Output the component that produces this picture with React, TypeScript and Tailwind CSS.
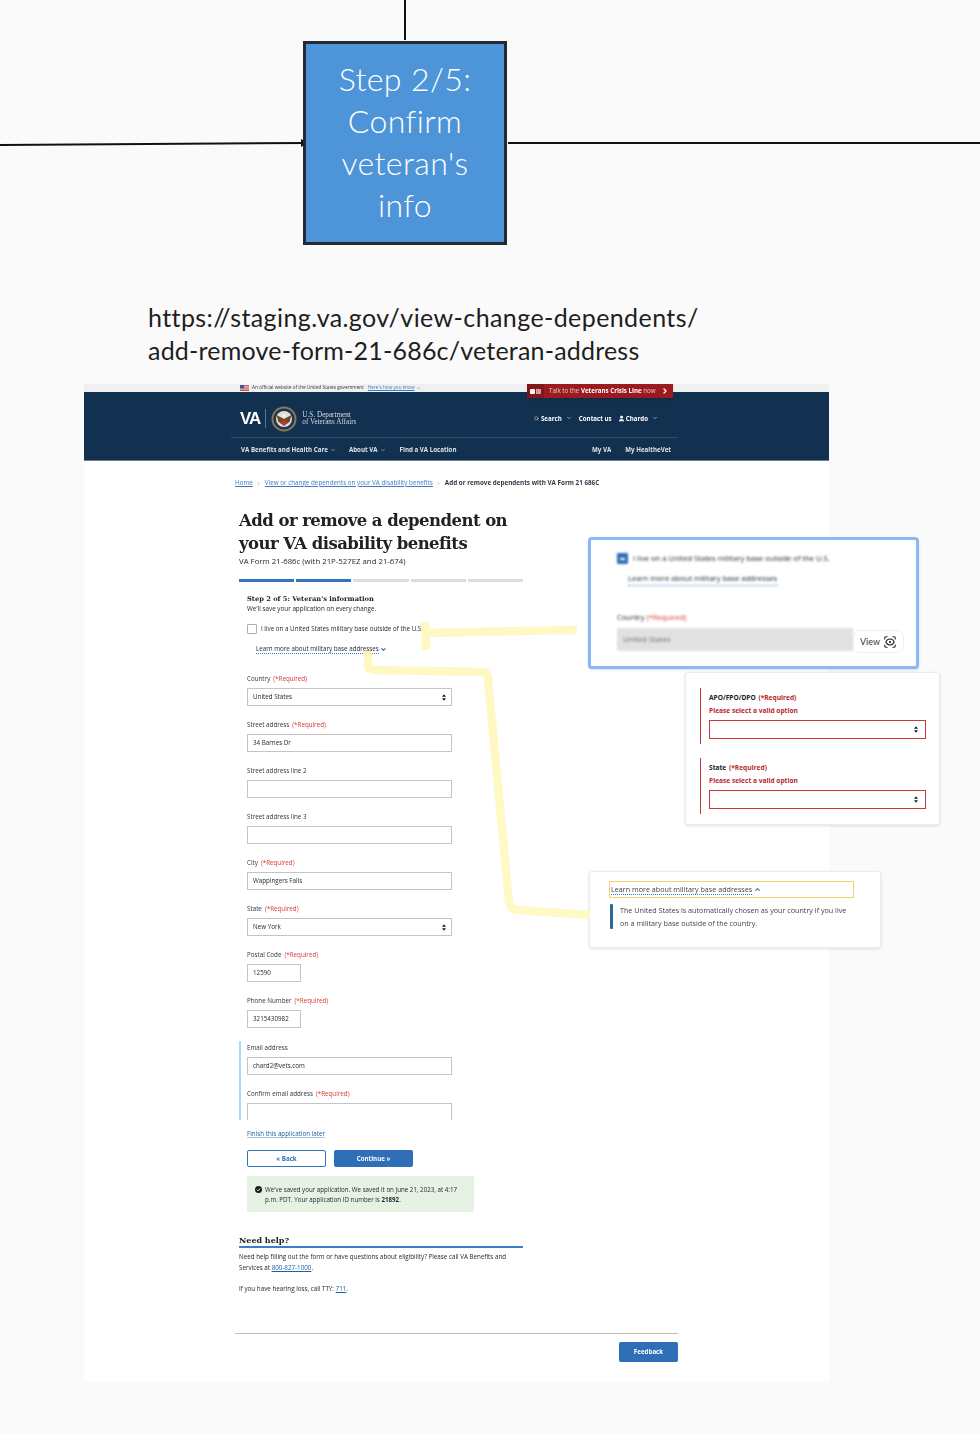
import { ChevronDown, ChevronRight, ChevronUp, ScanEye, Search, User } from "lucide-react";

const sans = "font-['Open_Sans','Noto_Sans',sans-serif]";
const slab = "font-['DejaVu_Serif',serif]";

function SelectArrows({ className = "" }: { className?: string }) {
  return (
    <svg viewBox="0 0 6 10" className={`w-[4px] h-[7px] ${className}`}>
      <path d="M3 0 6 4H0zM3 10 0 6h6z" fill="#1b1b1b" />
    </svg>
  );
}

function Required() {
  return <span className="text-[#d83933] ml-[3px]">(*Required)</span>;
}

function Field({
  label,
  required,
  value,
  select,
  short,
}: {
  label: string;
  required?: boolean;
  value?: string;
  select?: boolean;
  short?: boolean;
}) {
  return (
    <div className="mb-[14px]">
      <div className="text-[6.25px] leading-[10px] mb-[4px] text-[#2f3640]">
        {label}
        {required && <Required />}
      </div>
      <div
        className={`h-[18px] border border-[#c4c4c4] bg-white flex items-center justify-between px-[5px] text-[6.25px] text-[#232830] ${
          short ? "w-[54px]" : "w-[205px]"
        }`}
      >
        <span>{value}</span>
        {select && <SelectArrows />}
      </div>
    </div>
  );
}

function VaSeal() {
  return (
    <svg viewBox="0 0 26 26" className="w-[26px] h-[26px]">
      <circle cx="13" cy="13" r="12.5" fill="#8a7a4e" />
      <circle cx="13" cy="13" r="10.6" fill="#1c3560" />
      <circle cx="13" cy="13" r="8" fill="#e4e0d2" />
      <path d="M5.5 9 13 13l7.5-4-2 7-5.5 3-5.5-3z" fill="#6b4a25" />
      <path d="M9 17l4-3 4 3-4 3z" fill="#b23a3a" />
      <circle cx="13" cy="9.5" r="1.5" fill="#f4f1e5" />
    </svg>
  );
}

function Flag() {
  return (
    <svg viewBox="0 0 18 12" className="w-[9px] h-[6px]">
      <rect width="18" height="12" fill="#c8525c" />
      <path d="M0 2.5h18M0 5.5h18M0 8.5h18" stroke="#f3e9ea" strokeWidth="1.3" />
      <rect width="8" height="6.5" fill="#3d5a98" />
    </svg>
  );
}

function Header() {
  return (
    <div className="relative">
      <div className="h-[8px] bg-[#f0f0f0] pl-[156px] flex items-center gap-[3px] text-[4.7px] text-[#323a45]">
        <Flag />
        <span>An official website of the United States government</span>
        <span className="text-[#3d7cc4] underline ml-[1px]">Here's how you know</span>
        <ChevronDown size={5} className="-ml-[2px] text-[#3d7cc4]" />
      </div>
      <div className="h-[69px] bg-[#12304f] pl-[147px] border-b border-[#6b8098]">
        <div className="w-[447px] h-[46px] border-b border-[#2f4e6e] flex items-center pl-[9px] pt-[8px] text-white">
          <span className="text-[17px] font-bold font-['Liberation_Sans',sans-serif] tracking-[-1px]">VA</span>
          <span className="w-px h-[19px] bg-[#5d7690] ml-[5px] mr-[5px]" />
          <VaSeal />
          <div className="ml-[5px] text-[7.2px] leading-[7px] font-['Liberation_Serif',serif] text-[#d5dbe2]">
            <div>U.S. Department</div>
            <div>of Veterans Affairs</div>
          </div>
          <div className={`ml-auto flex items-center text-[6.2px] font-bold pr-[20px] ${sans}`}>
            <Search size={5} className="mr-[2px]" />
            <span>Search</span>
            <ChevronDown size={6} className="ml-[4px] mr-[7px]" />
            <span>Contact us</span>
            <User size={7} fill="white" className="ml-[6px] mr-[1px]" />
            <span>Chardo</span>
            <ChevronDown size={6} className="ml-[4px]" />
          </div>
        </div>
        <div className={`w-[447px] h-[23px] flex items-center pl-[10px] pr-[7px] text-[6.2px] font-bold text-[#dfe4ea] ${sans}`}>
          <span>VA Benefits and Health Care</span>
          <ChevronDown size={6} className="ml-[2px] mr-[13px]" />
          <span>About VA</span>
          <ChevronDown size={6} className="ml-[2px] mr-[14px]" />
          <span>Find a VA Location</span>
          <span className="ml-auto">My VA</span>
          <span className="ml-[14px]">My HealtheVet</span>
        </div>
      </div>
      <div className={`absolute left-[443px] top-0 w-[146px] h-[14px] bg-[#9b1a20] shadow-sm flex items-center text-[6.2px] text-[#e7c4c5] ${sans}`}>
        <span className="w-[17px] h-full bg-[#84151a] flex items-center justify-center">
          <span className="w-[5px] h-[5px] bg-white rounded-[1px] mr-[1px]" />
          <span className="w-[5px] h-[5px] bg-[#d89a9c]" />
        </span>
        <span className="ml-[5px]">
          Talk to the <b className="text-white">Veterans Crisis Line</b> now
        </span>
        <ChevronRight size={8} strokeWidth={4} className="ml-auto mr-[4px] text-white" />
      </div>
    </div>
  );
}

function Form() {
  return (
    <div className="pl-[4px] text-[#232830]">
      <div className={`${slab} font-bold text-[16.5px] leading-[23px] text-[#212121] mt-[22px] tracking-[-0.55px]`}>
        Add or remove a dependent on
        <br />
        your VA disability benefits
      </div>
      <div className="text-[7.8px] leading-[8px] mt-[2px]">VA Form 21-686c (with 21P-527EZ and 21-674)</div>
      <div className="flex gap-[2px] mt-[14px] w-[284px]">
        <div className="h-[3px] flex-1 bg-[#2e76be]" />
        <div className="h-[3px] flex-1 bg-[#2e76be]" />
        <div className="h-[3px] flex-1 bg-[#dcdcdc]" />
        <div className="h-[3px] flex-1 bg-[#dcdcdc]" />
        <div className="h-[3px] flex-1 bg-[#dcdcdc]" />
      </div>
      <div className="pl-[8px]">
        <div className={`${slab} font-bold text-[6.7px] leading-[10px] mt-[12px] text-[#212121]`}>
          Step 2 of 5: Veteran's information
        </div>
        <div className="text-[6.3px] leading-[10px]">We'll save your application on every change.</div>
        <div className="flex items-center mt-[10px] text-[6.25px]">
          <span className="w-[10px] h-[10px] border border-[#a9aeb1] rounded-[1px] bg-white mr-[4px]" />
          <span>I live on a United States military base outside of the U.S.</span>
        </div>
        <div className="flex items-center mt-[10px] ml-[9px] text-[6.25px] leading-[9px]">
          <span className="border-b border-dotted border-[#3d7cc4]">Learn more about military base addresses</span>
          <ChevronDown size={7} strokeWidth={4} className="ml-[1px] text-[#2e76be]" />
        </div>
        <div className="mt-[20px]">
          <Field label="Country" required value="United States" select />
          <Field label="Street address" required value="34 Barnes Dr" />
          <Field label="Street address line 2" />
          <Field label="Street address line 3" />
          <Field label="City" required value="Wappingers Falls" />
          <Field label="State" required value="New York" select />
          <Field label="Postal Code" required value="12590" short />
          <Field label="Phone Number" required value="3215430982" short />
        </div>
        <div className="-ml-[8px] pl-[6px] -mt-[1px] h-[79px] overflow-hidden border-l-2 border-[#a8dcf5]">
          <div className="pt-[2px]">
            <Field label="Email address" value="chard2@vets.com" />
            <Field label="Confirm email address" required />
          </div>
        </div>
        <div className="text-[6.25px] leading-[8px] text-[#1c5a9a] mt-[10px] underline decoration-[#a9c5e3]">
          Finish this application later
        </div>
        <div className={`flex gap-[8px] mt-[12px] text-[6.2px] font-bold ${sans}`}>
          <div className="w-[79px] h-[17px] rounded-[2px] border border-[#2e76be] bg-white flex items-center justify-center text-[#2e76be]">
            « Back
          </div>
          <div className="w-[79px] h-[17px] rounded-[2px] bg-[#2e6fb8] flex items-center justify-center text-white">
            Continue »
          </div>
        </div>
        <div className="w-[227px] h-[36px] bg-[#e6f2e3] mt-[9px] flex pl-[8px] pt-[9px] text-[6.2px] leading-[10px]">
          <svg viewBox="0 0 12 12" className="w-[7px] h-[7px] mr-[3px] mt-[1px] shrink-0">
            <circle cx="6" cy="6" r="6" fill="#1b1b1b" />
            <path d="M3 6.2 5.2 8.4 9 4" stroke="white" strokeWidth="1.6" fill="none" />
          </svg>
          <div className="w-[200px]">
            We've saved your application. We saved it on June 21, 2023, at 4:17 p.m. PDT. Your application ID number is{" "}
            <b>21892</b>.
          </div>
        </div>
      </div>
      <div className={`${slab} font-bold text-[8px] leading-[12px] mt-[22px] text-[#212121]`}>Need help?</div>
      <div className="w-[284px] h-[2px] bg-[#3a80c9]" />
      <div className="w-[284px] text-[6.25px] leading-[11px] mt-[3px]">
        Need help filling out the form or have questions about eligibility? Please call VA Benefits and Services at{" "}
        <span className="text-[#1c5fa8] underline">800-827-1000</span>.
      </div>
      <div className="text-[6.25px] leading-[11px] mt-[10px]">
        If you have hearing loss, call TTY: <span className="text-[#1c5fa8] underline">711</span>.
      </div>
    </div>
  );
}

function PageShot() {
  return (
    <div className={`absolute left-[84px] top-[384px] w-[745px] h-[998px] bg-white overflow-hidden blur-[0.4px] ${sans}`}>
      <Header />
      <div className="pl-[151px] w-[594px]">
        <div className="flex items-center gap-[3.5px] mt-[18px] text-[6.3px] leading-[8px] text-[#3d7cc4]">
          <span className="underline">Home</span>
          <ChevronRight size={5} className="text-[#757575]" />
          <span className="underline">View or change dependents on your VA disability benefits</span>
          <ChevronRight size={5} className="text-[#757575]" />
          <span className="font-bold text-[#323a45]">Add or remove dependents with VA Form 21 686C</span>
        </div>
        <Form />
        <div className="w-[443px] h-px bg-[#bdbdbd] mt-[39px]" />
        <div className="flex justify-end w-[443px] mt-[8px]">
          <div className="w-[59px] h-[20px] rounded-[2px] bg-[#2e6fb8] flex items-center justify-center text-[6.2px] font-bold text-white">
            Feedback
          </div>
        </div>
      </div>
    </div>
  );
}

function BlurredPanel() {
  return (
    <div className="absolute left-[588px] top-[537px] w-[331px] h-[132px] bg-white border-[3px] border-[#8ab8f8] rounded-[4px] shadow-sm">
      <div className={`blur-[1.3px] pl-[26px] pt-[13px] text-[7.6px] text-[#232830] ${sans}`}>
        <div className="flex items-center">
          <span className="w-[11px] h-[11px] bg-[#2e6fb8] rounded-[1px] mr-[5px] flex items-center justify-center">
            <span className="w-[5px] h-[2px] bg-white" />
          </span>
          <span>I live on a United States military base outside of the U.S.</span>
        </div>
        <div className="ml-[11px] mt-[9px] w-[150px] whitespace-nowrap text-[7.6px] border-b border-dotted border-[#3d7cc4]">
          Learn more about military base addresses
        </div>
        <div className="mt-[26px] text-[7.4px] leading-[10px]">
          Country <span className="text-[#d83933]">(*Required)</span>
        </div>
        <div className="w-[236px] h-[23px] bg-[#dfe1e2] mt-[6px] pl-[6px] flex items-center text-[#757575]">United States</div>
      </div>
      <div className="absolute left-[262px] top-[90px] w-[51px] h-[23px] bg-white rounded-[7px] border border-[#eeeeee] flex items-center justify-center gap-[3px] text-[9px] text-[#333333] font-['Lato',sans-serif]">
        View
        <ScanEye size={14} strokeWidth={1.8} className="text-[#1b1b1b]" />
      </div>
    </div>
  );
}

function ErrorSelect({ label }: { label: string }) {
  return (
    <div className="border-l-[1.5px] border-[#c9353b] pl-[8px] h-[56px] pt-[5px]">
      <div className="text-[6.6px] leading-[10px] font-bold text-[#212121]">
        {label} <span className="text-[#b7282e] ml-[1px]">(*Required)</span>
      </div>
      <div className="text-[6.6px] leading-[10px] font-bold text-[#b7282e] mt-[3px]">Please select a valid option</div>
      <div className="w-[217px] h-[19px] border border-[#c9353b] mt-[4px] bg-white flex items-center justify-end pr-[7px]">
        <SelectArrows />
      </div>
    </div>
  );
}

function ErrorCard() {
  return (
    <div className={`absolute left-[685px] top-[672px] w-[255px] h-[153px] bg-white rounded-[3px] border border-[#ececec] shadow-[0_1px_3px_rgba(0,0,0,0.12)] pl-[14px] pt-[15px] flex flex-col gap-[14px] ${sans}`}>
      <ErrorSelect label="APO/FPO/DPO" />
      <ErrorSelect label="State" />
    </div>
  );
}

function LearnMoreCard() {
  return (
    <div className={`absolute left-[589px] top-[871px] w-[292px] h-[77px] bg-white rounded-[3px] border border-[#ececec] shadow-[0_1px_3px_rgba(0,0,0,0.12)] pl-[19px] pt-[9px] text-[7.2px] text-[#3d4551] ${sans}`}>
      <div className="w-[245px] h-[17px] border border-[#f3cf6e] flex items-center pl-[1px]">
        <span className="border-b border-dotted border-[#3d7cc4] leading-[9px] blur-[0.3px]">Learn more about military base addresses</span>
        <ChevronUp size={7} strokeWidth={4} className="ml-[2px] text-[#2e76be]" />
      </div>
      <div className="flex mt-[6px] ml-[1px]">
        <span className="w-[3px] h-[25px] bg-[#2a6a9c] rounded-[1px] mr-[7px] shrink-0" />
        <div className="w-[236px] leading-[12.5px] blur-[0.3px]">
          The United States is automatically chosen as your country if you live on a military base outside of the country.
        </div>
      </div>
    </div>
  );
}

// connectors and marker strokes of the board, all in page coordinates
function BoardLines() {
  return (
    <svg viewBox="0 0 980 1434" className="absolute left-0 top-0 w-[980px] h-[1434px] pointer-events-none">
      <path d="M405 0V40" stroke="#111111" strokeWidth="2" />
      <path d="M0 145 304 143" stroke="#111111" strokeWidth="2" fill="none" />
      <path d="M508 143H980" stroke="#111111" strokeWidth="2" />
      <path d="M301 139l7 4-7 4z" fill="#111111" />
      <g stroke="#fff8bf" strokeWidth="8.5" fill="none" opacity="0.9">
        <path d="M577 630 425 633" />
        <path d="M425 622 426 650" />
        <path d="M368 651V664Q368 670 376 670L482 672Q488 672 488 680L509 902Q510 909 518 910L590 915" strokeLinejoin="round" />
      </g>
    </svg>
  );
}

export default function App() {
  return (
    <div className="relative w-[980px] h-[1434px] bg-[#fafafa] overflow-hidden">
      <PageShot />
      <BlurredPanel />
      <ErrorCard />
      <LearnMoreCard />
      <BoardLines />
      <div className="absolute left-[303px] top-[41px] w-[204px] h-[204px] bg-[#4d94d8] border-[3px] border-[#222b33] flex items-center justify-center text-center text-white text-[32px] leading-[42px] tracking-[0.4px] pb-[2px] font-light font-['Lato',sans-serif]">
        <div>
          Step 2/5:
          <br />
          Confirm
          <br />
          veteran's
          <br />
          info
        </div>
      </div>
      <div className="absolute left-[148px] top-[301px] text-[25px] leading-[33px] text-[#1e1e1e] font-['Lato',sans-serif]">
        <div className="tracking-[0.41px]">https://staging.va.gov/view-change-dependents/</div>
        <div className="tracking-[0.2px]">add-remove-form-21-686c/veteran-address</div>
      </div>
    </div>
  );
}
